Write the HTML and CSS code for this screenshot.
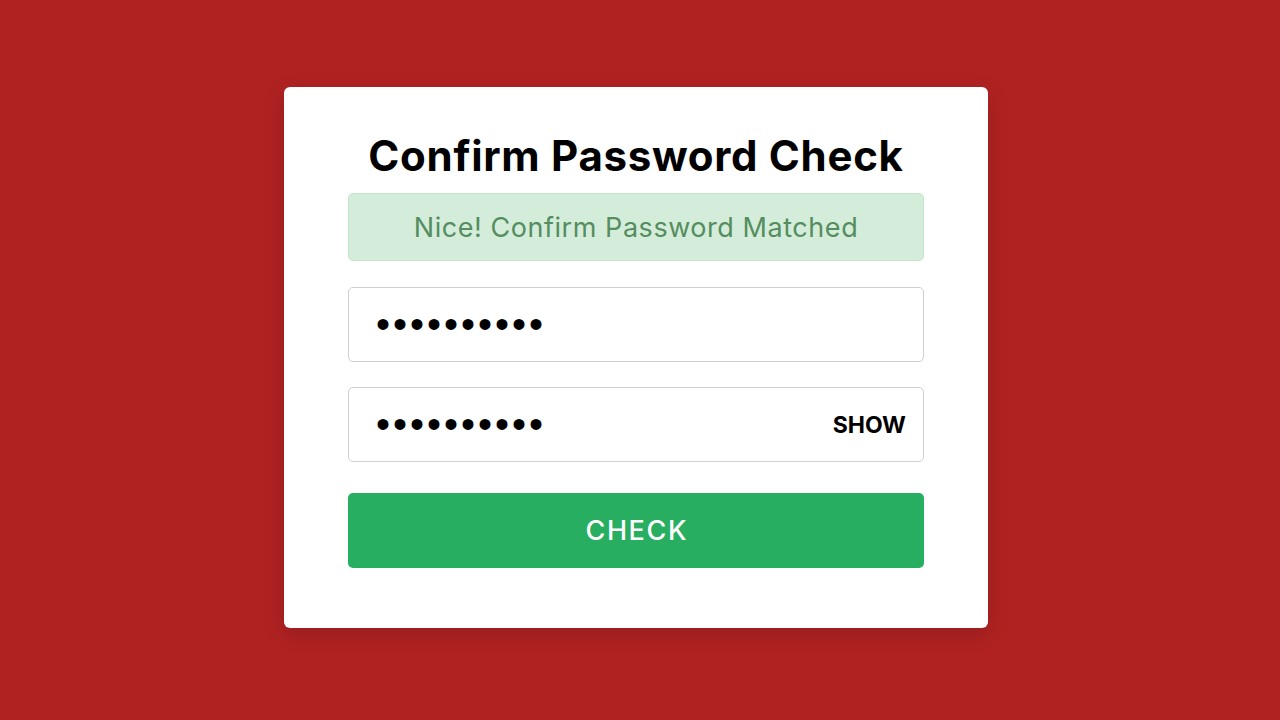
FILE: index.html
```html
<!DOCTYPE html>
<html lang="en">
<head>
  <meta charset="UTF-8" />
  <title>Confirm Password Check</title>
  <link rel="stylesheet" href="styles.css">
</head>
<body>

<div class="container">
  <h1>Confirm Password Check</h1>
  <div class="alert">Nice! Confirm Password Matched</div>

  <div class="field">
    <input type="password" id="password" value="1234567890" />
  </div>

  <div class="field">
    <input type="password" id="confirm" value="1234567890" />
    <span class="show" id="toggle">SHOW</span>
  </div>

  <button type="button">CHECK</button>
</div>

</body>
</html>
```

FILE: styles.css
```css
* { box-sizing: border-box; margin: 0; padding: 0; }

body {
  font-family: 'Inter', 'Open Sans', sans-serif;
  background: #b02222;
  height: 100vh;
  display: flex;
  justify-content: center;
  align-items: flex-start;
  padding-right: 8px;
}

.container {
  width: 704px;
  margin-top: 87px;
  background: #fff;
  border-radius: 6px;
  padding: 44px 64px 60px;
  box-shadow: 0 6px 20px rgba(0, 0, 0, 0.15);
}

h1 {
  text-align: center;
  font-size: 42px;
  font-weight: 700;
  letter-spacing: 0.7px;
  color: #000;
  line-height: 1.2;
  margin-bottom: 12px;
}

.alert {
  height: 68px;
  display: flex;
  align-items: center;
  justify-content: center;
  background: #d4edda;
  border: 1px solid #c3e6cb;
  border-radius: 5px;
  color: #558d60;
  font-size: 27px;
  font-weight: 400;
  letter-spacing: 0.55px;
  margin-bottom: 26px;
}

.field {
  position: relative;
  height: 75px;
  margin-bottom: 25px;
}

.field input {
  width: 100%;
  height: 100%;
  border: 1px solid #cfcfcf;
  border-radius: 5px;
  padding: 0 27px;
  font-family: 'Liberation Sans', sans-serif;
  font-size: 40px;
  letter-spacing: 3px;
  color: #000;
  outline: none;
}

.show {
  position: absolute;
  right: 18px;
  top: 50%;
  transform: translateY(-50%);
  font-size: 23px;
  font-weight: 700;
  color: #000;
  cursor: pointer;
}

button {
  display: block;
  width: 100%;
  height: 75px;
  margin-top: 31px;
  background: #27ae60;
  border: none;
  border-radius: 5px;
  color: #fff;
  font-family: 'Inter', sans-serif;
  font-size: 27px;
  font-weight: 500;
  letter-spacing: 1.6px;
  text-indent: 1.6px;
  cursor: pointer;
}
```
